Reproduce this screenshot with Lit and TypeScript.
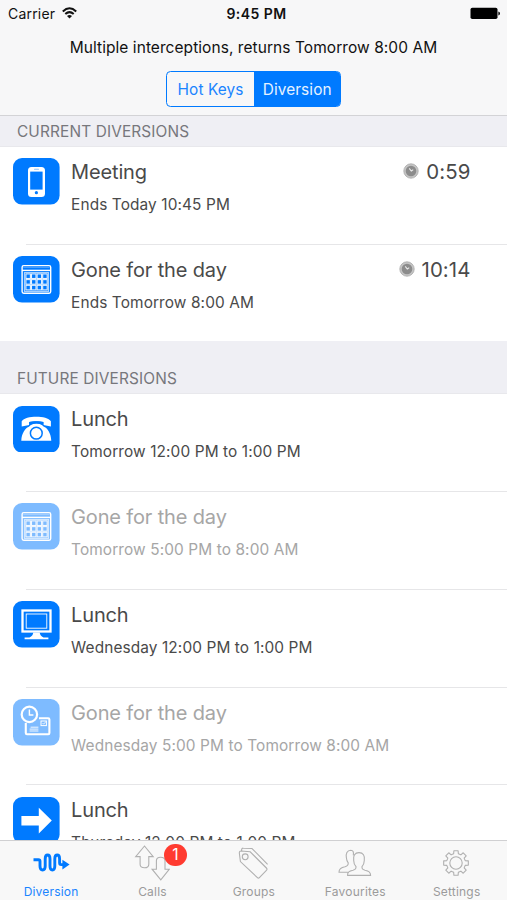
import { LitElement, html, svg, css, nothing } from "lit";
import { customElement, property } from "lit/decorators.js";
import { classMap } from "lit/directives/class-map.js";

const dots = [0, 1, 2].flatMap((r) => [0, 1, 2, 3].map((c) => [c, r]));

const glyphs: Record<string, unknown> = {
  phone: svg`
    <rect x="15" y="9" width="17" height="30" rx="3.5" fill="#fff"/>
    <rect x="17.2" y="13.6" width="12.4" height="18" fill="#007aff"/>
    <rect x="21" y="10.8" width="5" height="1" rx=".5" fill="#007aff" opacity=".45"/>
    <circle cx="23.4" cy="34.7" r="1.6" fill="#007aff"/>`,
  calendar: svg`
    <rect x="9.1" y="9.6" width="28.6" height="27.6" rx="1.6" fill="none" stroke="#fff" stroke-width="1.4"/>
    <path d="M9 14.4H38" stroke="#fff" stroke-width="1.4"/>
    <path d="M10.2 11.6H36.6" stroke="#fff" stroke-width=".6" opacity=".5"/>
    <rect x="11.3" y="16.7" width="24.4" height="18.6" fill="none" stroke="#fff" stroke-width=".7"/>
    ${dots.map(([c, r]) => svg`<rect x=${12.9 + c * 5.6} y=${17.9 + r * 5.7} width="4.5" height="4.6" fill="#007aff" stroke="#fff" stroke-width="1.1" stroke-opacity=".9"/>`)}`,
  telephone: svg`
    <path d="M8.7 20.6V15.2C12.6 9.3 34 9.3 37.9 15.2V20.6L30.4 19V16C27 14.9 19.6 14.9 16.2 16V19Z" fill="#fff"/>
    <path d="M16.2 20.6C18.5 16.6 28.3 16.6 30.6 20.6C34.6 22.2 38 27.4 38.3 34.8H8.3C8.6 27.4 12.2 22.2 16.2 20.6Z" fill="#fff"/>
    <path d="M16.2 16V19L14.8 21.6Q18 17.6 23.4 17.6T32 21.6L30.4 19V16Q23.4 14.4 16.2 16Z" fill="#007aff"/>
    <circle cx="23.3" cy="27.2" r="5.9" fill="none" stroke="#007aff" stroke-width="1.5"/>`,
  computer: svg`
    <rect x="9.5" y="9.5" width="28" height="21" fill="none" stroke="#fff" stroke-width="2.3"/>
    <rect x="13.2" y="13" width="20.6" height="14.2" fill="none" stroke="#fff" stroke-width=".9"/>
    <path d="M20.3 31.5H26.7Q27 35 30.5 36.4H35.4V38.2H11.6V36.4H16.5Q20 35 20.3 31.5Z" fill="#fff"/>`,
  timecard: svg`
    <path d="M26 19.2H35.2Q36.4 19.2 36.4 20.4V34Q36.4 35.2 35.2 35.2H14Q12.8 35.2 12.8 34V24" fill="none" stroke="#fff" stroke-width="2.1"/>
    <circle cx="16.4" cy="15.4" r="7.7" fill="none" stroke="#fff" stroke-width="2.2"/>
    <path d="M16.4 10.6V16H20.4" fill="none" stroke="#fff" stroke-width="1.4"/>
    <rect x="28" y="22" width="5.4" height="4.6" fill="none" stroke="#fff" stroke-width="1"/>
    <path d="M29.5 24L30.6 25.2L33 22.5" fill="none" stroke="#fff" stroke-width=".8"/>
    <path d="M17.6 28.2H25.4M16.6 30.1H25.4M16.6 32H25.4" stroke="#fff" stroke-width=".9"/>`,
  arrow: svg`<path d="M8.4 18.9H25.8V10.8L38.8 23.6L25.8 36.4V28.4H8.4Z" fill="#fff"/>`,
};

@customElement("diversion-row")
class DiversionRow extends LitElement {
  static styles = css`
    :host { display: block; height: 97.75px; flex: none; }
    :host([last]) { height: 96.25px; }
    .row { display: flex; padding: 11.4px 36.5px 0 13px; position: relative; box-sizing: border-box; height: 100%; }
    .tile { width: 46.6px; height: 46.6px; flex: none; }
    .text { margin-left: 11.5px; flex: 1; white-space: nowrap; color: #4a4a4a; }
    .title { font-size: 20px; line-height: 26px; letter-spacing: -0.15px; padding-top: 0.6px; }
    .sub { font-size: 15.4px; line-height: 20px; margin-top: 10px; letter-spacing: 0.11px; }
    .time { display: flex; align-items: center; height: 26px; gap: 7px; font-size: 20.4px; letter-spacing: 0.1px; color: #4a4a4a; }
    .clock { width: 16px; height: 16px; }
    .faded .text { color: #a6a6a6; }
    .faded .tile { opacity: 0.5; }
    .line { position: absolute; left: 26px; right: 0; bottom: 0; height: 1px; background: #e6e6e8; }
  `;
  @property() icon = "phone";
  @property() name = "";
  @property() detail = "";
  @property() remaining = "";
  @property({ type: Boolean }) faded = false;
  @property({ type: Boolean, reflect: true }) last = false;
  render() {
    return html`<div class=${classMap({ row: true, faded: this.faded })}>
      <svg class="tile" viewBox="0 0 46.6 46.6">
        <rect width="46.6" height="46.6" rx="9" fill="#007aff"/>${glyphs[this.icon]}
      </svg>
      <div class="text"><div class="title">${this.name}</div><div class="sub">${this.detail}</div></div>
      ${this.remaining
        ? html`<div class="time"><svg class="clock" viewBox="0 0 16 16">
            <circle cx="8" cy="8" r="7.2" fill="#c4c4c4" stroke="#aaa" stroke-width=".8"/>
            <circle cx="8" cy="8" r="5.3" fill="#8c8c8c"/>
            <path d="M8.6 8.4L6.2 5.4M8.4 8.2L10.2 6.6" stroke="#e8e8e8" stroke-width="1.1"/>
          </svg><span>${this.remaining}</span></div>`
        : nothing}
      ${this.last ? nothing : html`<div class="line"></div>`}
    </div>`;
  }
}

const gear = (() => {
  const pts: string[] = [];
  for (let i = 0; i < 8; i++) {
    const a = (i * Math.PI) / 4;
    for (const [d, r] of [[-0.25, 9.5], [-0.17, 12.5], [0.17, 12.5], [0.25, 9.5]]) {
      pts.push(`${(15 + r * Math.sin(a + d)).toFixed(2)} ${(15 - r * Math.cos(a + d)).toFixed(2)}`);
    }
  }
  return "M" + pts.join("L") + "Z";
})();

const tabs = [
  { label: "Diversion", w: 38, h: 20, art: svg`<path d="M1.5 6.8H6.4Q8 6.8 8 8.4V13Q8 17 10.6 17Q13.2 17 13.2 13V6Q13.2 2 15.6 2Q18 2 18 6V13Q18 17 20.4 17Q22.8 17 22.8 13V6Q22.8 2 25.2 2Q27.6 2 27.6 6V9.8Q27.6 11.6 29.2 11.6H31" fill="none" stroke="#007aff" stroke-width="2.9"/><path d="M30.4 6.8L37.6 11.6L30.4 16.4Z" fill="#007aff"/>` },
  { label: "Calls", w: 36, h: 36, badge: "1", art: svg`<path d="M10.5 1L19.2 11.6H14.8V19.2Q14.8 22.8 10.5 22.8Q6.1 22.8 6.1 19.2V11.6H1.7ZM22.4 15.8Q22.4 12.2 26.6 12.2Q31 12.2 31 15.8V24.2H35.4L26.8 34.8L18.1 24.2H22.4Z"/>` },
  { label: "Groups", w: 32, h: 34, art: svg`<path d="M2.3 6.8Q2.3 5 4 5L13.2 5.8L29.4 22Q30.6 23.2 29.4 24.4L22.4 31.6Q21.4 32.6 20.4 31.6L3.4 15.6ZM4.6 4.8V3.6Q4.8 2 6.2 2.1L15 2.5L30.6 18.4"/><circle cx="8.2" cy="10.8" r="2.9"/>` },
  { label: "Favourites", w: 34, h: 28, art: svg`<path d="M9.6 26.4Q9 22.2 15 21.2Q18.3 20.4 18 17.6Q15.7 15 15.7 11.4C15 6.8 16.8 3.6 21 3.6C25.2 3.6 27 6.8 26.3 11.4Q26.2 15 24 17.6Q23.6 20.4 27 21.2Q32.8 22.2 32.6 26.4ZM15.3 6.3Q16.2 1.4 12.8 1.2C9 1.2 7.6 4.6 8.4 8.8Q8.5 11.6 10.2 13.8Q10.6 16.6 7 17.8Q1 18.8 1 23.2H9.8"/>` },
  { label: "Settings", w: 30, h: 30, art: svg`<path d=${gear} stroke-linejoin="round"/><circle cx="15" cy="15" r="6.2"/>` },
];

@customElement("app-root")
class AppRoot extends LitElement {
  static styles = css`
    :host { display: flex; flex-direction: column; width: 507px; height: 900px; overflow: hidden; background: #fff; font-family: Inter, "Liberation Sans", sans-serif; color: #111; }
    .head { height: 116px; flex: none; box-sizing: border-box; background: #f7f7f8; border-bottom: 1px solid #d3d3d6; }
    .status { display: grid; grid-template-columns: 1fr auto 1fr; align-items: center; height: 27px; padding: 0 7px 0 8px; font-size: 14px; }
    .carrier { display: flex; align-items: center; gap: 6.5px; letter-spacing: 0.2px; }
    .wifi { width: 15px; height: 12px; margin-top: -2px; }
    .clock { font-weight: 600; letter-spacing: 0.45px; padding-left: 5px; }
    .battery { width: 30px; height: 13px; justify-self: end; }
    .note { text-align: center; font-size: 15.5px; line-height: 20px; margin-top: 10.6px; letter-spacing: 0.06px; white-space: nowrap; }
    .segments { display: flex; width: 175.2px; height: 36px; box-sizing: border-box; margin: 13.4px 0 0 166.3px; border: 1.3px solid #007aff; border-radius: 4.5px; overflow: hidden; font-size: 15.4px; letter-spacing: 0.1px; color: #1a84ff; }
    .seg { flex: 1; display: flex; align-items: center; justify-content: center; padding-top: 1.4px; }
    .on { background: #007aff; color: #e6f2ff; }
    .section { flex: none; box-sizing: border-box; display: flex; align-items: flex-end; padding: 0 17px 4.5px; background: #efeff4; border-bottom: 1px solid #e8e8ec; font-size: 15.4px; letter-spacing: 0.13px; line-height: 20px; color: #77777c; }
    .current { height: 31px; }
    .future { height: 53.3px; }
    .list { flex: 1; min-height: 0; overflow: hidden; display: flex; flex-direction: column; }
    .tabs { height: 60px; flex: none; box-sizing: border-box; display: grid; grid-template-columns: repeat(5, 1fr); background: #f8f8f8; border-top: 1px solid #d0d0d2; font-size: 12px; letter-spacing: 0.2px; color: #9b9b9b; }
    .tab { display: flex; flex-direction: column; align-items: center; }
    .active { color: #1a84ff; }
    .art { height: 43px; display: flex; align-items: center; position: relative; }
    .art svg { fill: none; stroke: #b0b0b0; stroke-width: 1.1; }
    .active svg { stroke: none; }
    .label { line-height: 16px; padding-left: 0.8px; }
    .badge { position: absolute; left: 30.2px; top: 2.6px; width: 22.4px; height: 22.4px; border-radius: 50%; background: #ff3b30; color: #fff; font-size: 15.5px; letter-spacing: 0; line-height: 22.4px; text-align: center; }
  `;
  render() {
    return html`
      <header class="head">
        <div class="status">
          <div class="carrier"><span class="cname">Carrier</span>
            <svg class="wifi" viewBox="0 0 15 12" fill="none" stroke="#111" stroke-width="2"><path d="M.8 4.4Q7.5 -1.8 14.2 4.4M3.3 7.1Q7.5 3.2 11.7 7.1"/><path d="M7.5 11.5L5 9Q7.5 6.9 10 9Z" fill="#111" stroke="none"/></svg>
          </div>
          <div class="clock">9:45 PM</div>
          <svg class="battery" viewBox="0 0 30 13"><rect x=".5" y=".7" width="27" height="11.4" rx="1.8"/><path d="M28.4 4.4Q30 5 30 6.4T28.4 8.4Z"/></svg>
        </div>
        <div class="note">Multiple interceptions, returns Tomorrow 8:00 AM</div>
        <div class="segments"><div class="seg">Hot Keys</div><div class="seg on">Diversion</div></div>
      </header>
      <main class="list">
        <div class="section current">CURRENT DIVERSIONS</div>
        <diversion-row icon="phone" name="Meeting" detail="Ends Today 10:45 PM" remaining="0:59"></diversion-row>
        <diversion-row icon="calendar" name="Gone for the day" detail="Ends Tomorrow 8:00 AM" remaining="10:14" last></diversion-row>
        <div class="section future">FUTURE DIVERSIONS</div>
        <diversion-row icon="telephone" name="Lunch" detail="Tomorrow 12:00 PM to 1:00 PM"></diversion-row>
        <diversion-row icon="calendar" name="Gone for the day" detail="Tomorrow 5:00 PM to 8:00 AM" faded></diversion-row>
        <diversion-row icon="computer" name="Lunch" detail="Wednesday 12:00 PM to 1:00 PM"></diversion-row>
        <diversion-row icon="timecard" name="Gone for the day" detail="Wednesday 5:00 PM to Tomorrow 8:00 AM" faded></diversion-row>
        <diversion-row icon="arrow" name="Lunch" detail="Thursday 12:00 PM to 1:00 PM"></diversion-row>
      </main>
      <nav class="tabs">
        ${tabs.map((t, i) => html`<div class=${classMap({ tab: true, active: i === 0 })}>
          <div class="art"><svg width=${t.w} height=${t.h} viewBox="0 0 ${t.w} ${t.h}">${t.art}</svg>${t.badge ? html`<span class="badge">${t.badge}</span>` : nothing}</div>
          <span class="label">${t.label}</span>
        </div>`)}
      </nav>`;
  }
}
